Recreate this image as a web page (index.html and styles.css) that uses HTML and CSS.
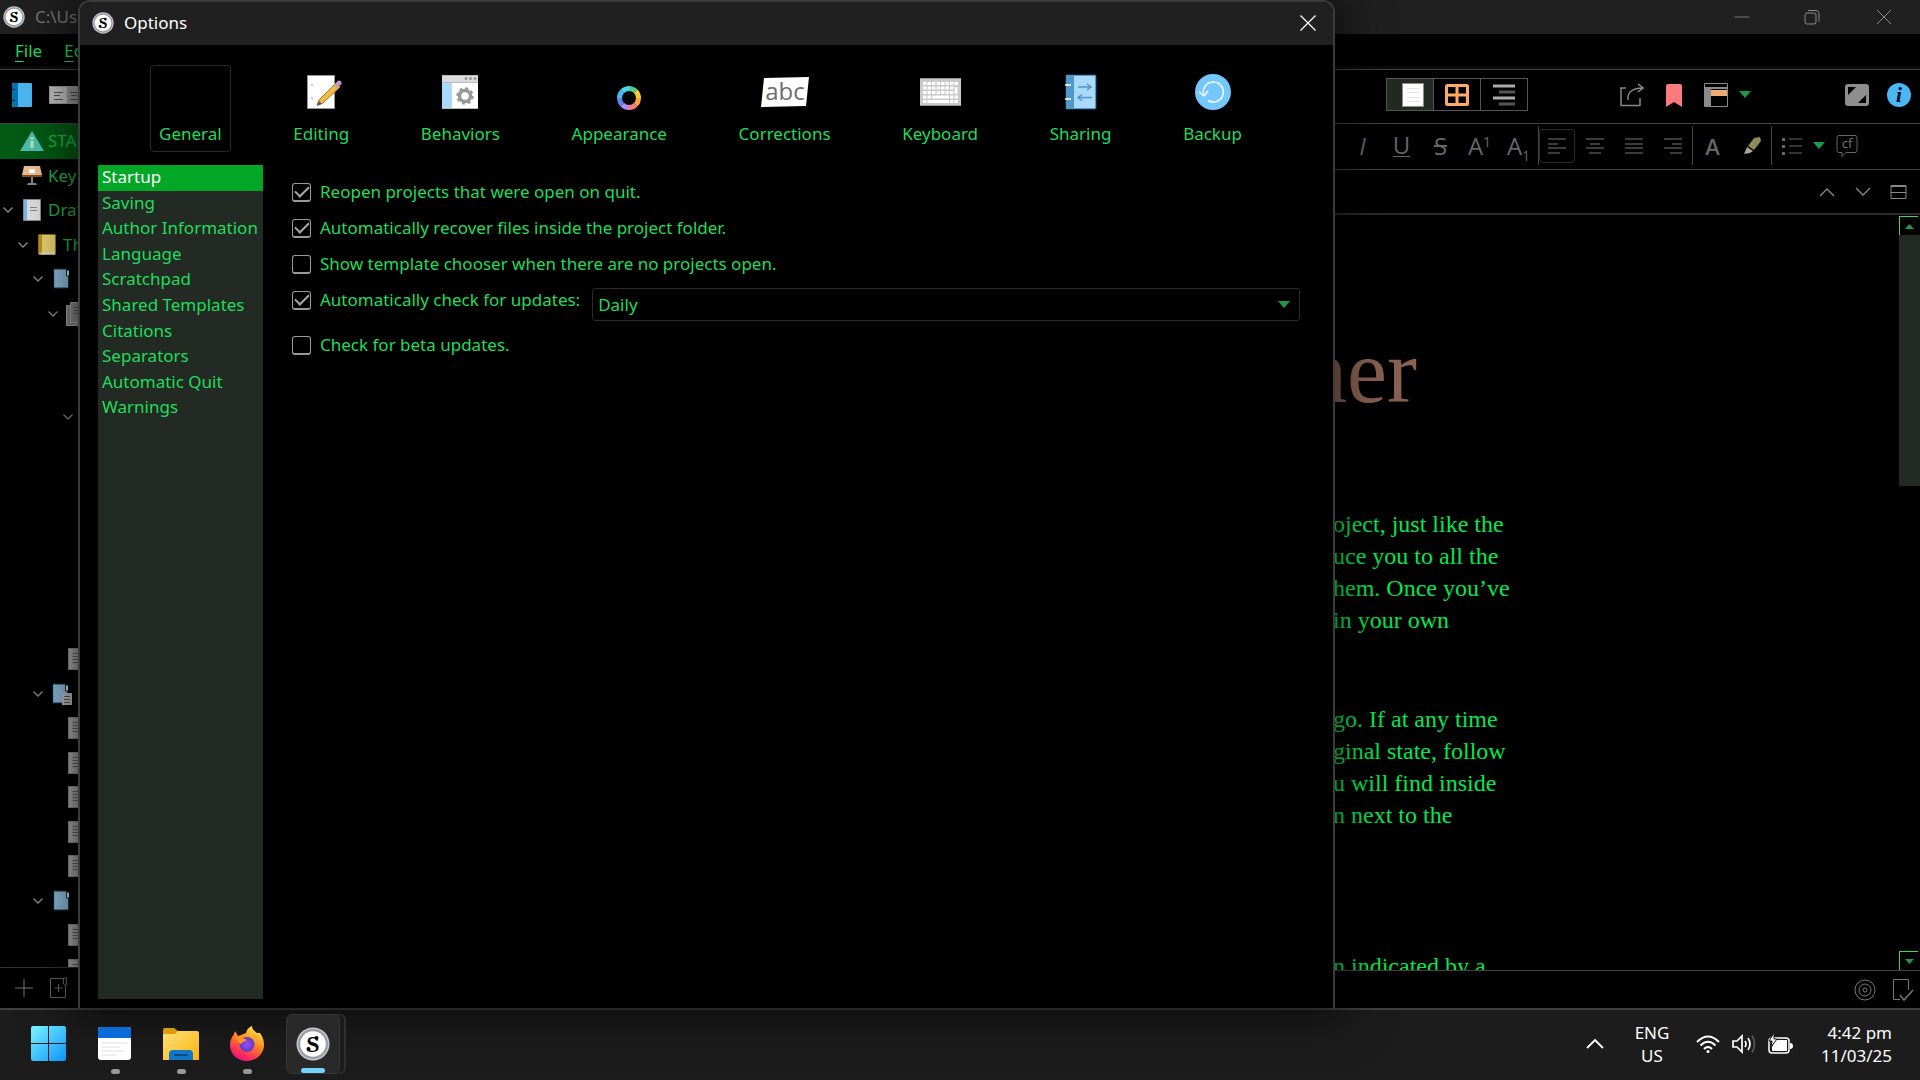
FILE: index.html
```html
<!DOCTYPE html>
<html lang="en">
<head>
<meta charset="utf-8">
<title>Options</title>
<link rel="stylesheet" href="styles.css">
</head>
<body>
<svg class="defs" aria-hidden="true">
  <defs>
    <linearGradient id="win" x1="0" y1="0" x2="1" y2="1"><stop offset="0" stop-color="#7df3ff"/><stop offset="1" stop-color="#0a94fb"/></linearGradient>
    <linearGradient id="fold" x1="0" y1="0" x2="1" y2="1"><stop offset="0" stop-color="#ffe07a"/><stop offset="1" stop-color="#f9b50c"/></linearGradient>
    <linearGradient id="fox" x1=".8" y1="0" x2=".3" y2="1"><stop offset="0" stop-color="#fff04a"/><stop offset=".45" stop-color="#ff8a1e"/><stop offset=".8" stop-color="#ff2f55"/><stop offset="1" stop-color="#e0128a"/></linearGradient>
    <radialGradient id="globe"><stop offset="0" stop-color="#9a4df5"/><stop offset="1" stop-color="#5a3cc4"/></radialGradient>
    <linearGradient id="grey"><stop offset="0" stop-color="#b4b4b4"/><stop offset="1" stop-color="#8c8c8c"/></linearGradient>
  </defs>
  <symbol id="logo" viewBox="0 0 34 34">
    <circle cx="17" cy="17" r="16.5" fill="#c4c6cc"/><circle cx="17" cy="17" r="15" fill="#9a9ca6"/><circle cx="17" cy="17" r="12.8" fill="#fff"/>
    <text x="17" y="25" text-anchor="middle" font-family="Liberation Serif, serif" font-weight="bold" font-size="24" fill="#0a0a0a">S</text>
    <circle cx="20.500" cy="11" r="2" fill="#0a0a0a"/><circle cx="12.500" cy="22" r="2" fill="#0a0a0a"/>
  </symbol>
  <symbol id="chev" viewBox="0 0 12 8"><path d="M1.500 1.500 6 6l4.500-4.500" fill="none" stroke="#8a8a8a" stroke-width="1.300"/></symbol>
  <symbol id="doc" viewBox="0 0 18 22"><path d="M0 0h18v22H0z" fill="#8a8a8a"/><path d="M1 1h17v20H1z" fill="url(#grey)"/><path d="M4.500 5.500H14M4.500 8.500H14M4.500 11.500H14M4.500 14.500H14" stroke="#666"/></symbol>
  <symbol id="folder" viewBox="0 0 18 22"><path d="M1 1h12.500v7h2v12H1z" fill="#8bb9d8" stroke="#10354d"/><path d="M15 2.500v5" stroke="#ddd" stroke-width="2"/><path d="M1.500 1.500v18" stroke="#6aa6cc"/></symbol>
  <symbol id="tri" viewBox="0 0 12 8"><path d="M0 0h12L6 7z" fill="#1c9a48"/></symbol>
</svg>

<main class="desktop">
  <section class="app" aria-label="Editor window">
    <header class="titlebar">
      <svg class="i22"><use href="#logo"/></svg>
      <span class="path">C:\Users</span>
      <div class="winctl">
        <button aria-label="Minimize"><svg width="16" height="16"><path d="M.5 8h15" stroke="#777"/></svg></button>
        <button aria-label="Restore"><svg width="16" height="16" fill="none" stroke="#8a8a8a"><rect x="1" y="4" width="11" height="11" rx="2"/><path d="M4 1.500h8q3 0 3 3v8"/></svg></button>
        <button aria-label="Close window"><svg width="16" height="16"><path d="m1 1 14 14M15 1 1 15" stroke="#8a8a8a"/></svg></button>
      </div>
    </header>
    <nav class="menubar"><a href="#file"><u>F</u>ile</a><a href="#edit"><u>E</u>dit</a></nav>
    <div class="toolbar">
      <button aria-label="Binder"><svg width="20" height="24"><rect width="20" height="24" rx="1" fill="#4ab6f2"/><path d="M1 0h5v24H1L0 22V2z" fill="#0672b0"/><path d="M0 6.500h3M0 17.500h3" stroke="#012"/></svg></button>
      <button class="cards" aria-label="Collections"><svg width="32" height="18"><path d="M0 0h32v18H0z" fill="#9a9a9a"/><path d="M1 1h17v16H1z" fill="#c0c0c0"/><path d="M5 6.500h9M5 9.500h6M5 13.500h9M21 6.500h8M22 9.500h6M21 13.500h8" stroke="#555"/></svg></button>
      <div class="viewgroup">
        <button class="on" aria-label="Document"><svg width="22" height="24"><rect x=".5" y=".5" width="21" height="23" fill="#fff" stroke="#8c8c8c"/><path d="M5 5.500h12M5 9.500h12M5 14.500h12M5 18.500h12" stroke="#e2e2e2"/></svg></button>
        <button aria-label="Corkboard"><svg width="24" height="22" fill="none" stroke="#ffab66" stroke-width="3"><rect x="1.500" y="1.500" width="21" height="19" rx="1"/><path d="M12 1v20M1 11h22"/></svg></button>
        <button aria-label="Outline"><svg width="22" height="22" stroke-width="3"><path d="M0 2h22M0 14h22" stroke="#aaa"/><path d="M6 8h16M6 20h16" stroke="#555"/></svg></button>
      </div>
      <div class="tools">
        <button class="w42" aria-label="Share"><svg width="24" height="24" fill="none" stroke="#888" stroke-width="1.500"><path d="M6 5H1v17.500h19V15"/><path d="M8 17C7 9 13 5 23 5M18 1l5 4-5 4"/></svg></button>
        <button class="w42" aria-label="Bookmark"><svg width="16" height="24"><path d="M0 3q0-2 2-2h12q2 0 2 2v21l-8-5-8 5z" fill="#ff7b7b"/></svg></button>
        <button class="w42" aria-label="Layout"><svg width="24" height="24"><path d="M.5.500h23v23H.5z" fill="#000" stroke="#8a8a8a"/><path d="M0 5h24" stroke="#8a8a8a" stroke-width="2"/><path d="M1 5h6v18H1z" fill="#8a8a8a"/><path d="M7 7h16v6H7z" fill="#f0ab74"/></svg></button>
        <button class="w16" aria-label="Layout menu"><svg class="tri"><use href="#tri"/></svg></button>
      </div>
      <div class="tools end">
        <button class="w42" aria-label="Compose"><svg width="24" height="22"><rect width="24" height="22" rx="3" fill="#8e8e8e"/><path d="M3 3h8l-8 8zM21 11v8h-8z" fill="#000"/></svg></button>
        <button class="w42" aria-label="Inspector"><svg width="24" height="24"><circle cx="12" cy="12" r="12" fill="#4ab6f2"/><text x="12" y="19" text-anchor="middle" font-family="Liberation Serif, serif" font-style="italic" font-weight="bold" font-size="21" fill="#002">i</text></svg></button>
      </div>
    </div>
    <div class="workspace">
      <aside class="binder">
        <div class="binderview"><ul class="tree">
          <li class="row sel"><i></i><b><svg width="24" height="20"><path d="M12 0 24 20H0z" fill="#4bbcb0"/><path d="M12 10v7M12 6v2.500" stroke="#b9e5b0" stroke-width="3"/></svg></b>START</li>
          <li class="row"><i></i><b><svg width="20" height="20"><path d="M2 0h16l2 9H0z" fill="#eebb92"/><path d="M0 9h20v2H0z" fill="#8b4c20"/><path d="M7 3h6v4H7z" fill="#fff"/><path d="M9 11h2v6h3l1 2H5l1-2h3z" fill="#888"/></svg></b>Key</li>
          <li class="row"><i><svg class="chev"><use href="#chev"/></svg></i><b><svg width="18" height="22"><path d="M.5.500h17v21H.5z" fill="#ddd" stroke="#888"/><path d="M1 1h3v20H1z" fill="#72b8f0"/><path d="M7 8.500h7M7 11.500h7" stroke="#888"/></svg></b>Draft</li>
          <li class="row l1"><i><svg class="chev"><use href="#chev"/></svg></i><b><svg width="18" height="22"><rect x=".5" y=".5" width="17" height="20" rx="1" fill="#e8d070" stroke="#93711c"/><path d="M1 1h3v18H1z" fill="#b6921f"/><path d="M3 19.500h14" stroke="#ddd" stroke-width="2"/></svg></b>The</li>
          <li class="row l2"><i><svg class="chev"><use href="#chev"/></svg></i><b><svg class="doc"><use href="#folder"/></svg></b></li>
          <li class="row l3"><i><svg class="chev"><use href="#chev"/></svg></i><b><svg width="22" height="24"><path d="M.5 3.500h17v20H.5z" fill="#888" stroke="#aaa"/><path d="M4.500.500h17v20h-17z" fill="#8a8a8a" stroke="#aaa"/><path d="M8 5.500h12M8 8.500h12M8 11.500h12" stroke="#555"/></svg></b></li>
          <li class="row"></li><li class="row"></li>
          <li class="row l4"><i><svg class="chev"><use href="#chev"/></svg></i></li>
          <li class="row"></li><li class="row"></li><li class="row"></li><li class="row"></li><li class="row"></li><li class="row"></li>
          <li class="row l3"><i></i><b><svg class="doc"><use href="#doc"/></svg></b></li>
          <li class="row l2"><i><svg class="chev"><use href="#chev"/></svg></i><b><svg class="doc wide" viewBox="0 0 20 22"><use href="#folder" width="18" height="22"/><path d="M10 10h10v12H10z" fill="#bbb"/><path d="M12 13.500h6M12 16.500h6M12 19.500h6" stroke="#555"/></svg></b></li>
          <li class="row l3"><i></i><b><svg class="doc"><use href="#doc"/></svg></b></li>
          <li class="row l3"><i></i><b><svg class="doc"><use href="#doc"/></svg></b></li>
          <li class="row l3"><i></i><b><svg class="doc"><use href="#doc"/></svg></b></li>
          <li class="row l3"><i></i><b><svg class="doc"><use href="#doc"/></svg></b></li>
          <li class="row l3"><i></i><b><svg class="doc"><use href="#doc"/></svg></b></li>
          <li class="row l2"><i><svg class="chev"><use href="#chev"/></svg></i><b><svg class="doc"><use href="#folder"/></svg></b></li>
          <li class="row l3"><i></i><b><svg class="doc"><use href="#doc"/></svg></b></li>
          <li class="row l3"><i></i><b><svg class="doc"><use href="#doc"/></svg></b></li>
        </ul></div>
        <div class="binderfoot">
          <button aria-label="Add"><svg width="18" height="18"><path d="M9 0v18M0 9h18" stroke="#777"/></svg></button>
          <button aria-label="Add folder"><svg width="20" height="22" fill="none" stroke="#666"><path d="M14 1.500H1.500v19h15V8M14.500 1v6l2 1.500 1-1.500V1zM9.500 7v8M5.500 11h8"/></svg></button>
        </div>
      </aside>
      <div class="editor">
        <div class="formatbar">
          <button class="fmt"><em>I</em></button><button class="fmt"><span class="ul">U</span></button><button class="fmt"><s>S</s></button>
          <button class="fmt"><span>A<sup>1</sup></span></button><button class="fmt"><span>A<sub>1</sub></span></button>
          <span class="sep"></span>
          <button class="fmt boxed" aria-label="Align left"><svg class="lines"><path d="M0 1h18M0 6h10M0 10h18M0 15h12"/></svg></button>
          <button class="fmt" aria-label="Align center"><svg class="lines"><path d="M0 1h18M4 6h10M0 10h18M3 15h12"/></svg></button>
          <button class="fmt" aria-label="Justify"><svg class="lines"><path d="M0 1h18M0 6h18M0 10h18M0 15h18"/></svg></button>
          <button class="fmt" aria-label="Align right"><svg class="lines"><path d="M0 1h18M8 6h10M0 10h18M6 15h12"/></svg></button>
          <span class="sep"></span>
          <button class="fmt"><strong>A</strong></button>
          <button class="fmt" aria-label="Highlight"><svg width="18" height="18"><path d="M11 1l6-1 1 4-7 9-6-4z" fill="#8f8a57"/><path d="m4 10 6 4-3 2-6 1z" fill="#a9a58e"/></svg></button>
          <span class="sep"></span>
          <button class="fmt" aria-label="List"><svg width="20" height="18"><path d="M7 2h13M7 9h13M7 16h13" stroke="#666"/><path d="M0 1h3v3H0zM0 8h3v3H0zM0 15h3v3H0z" fill="#666"/></svg></button>
          <button class="w16" aria-label="List menu"><svg class="tri"><use href="#tri"/></svg></button>
          <button class="fmt" aria-label="Comment"><svg width="22" height="24"><path d="M3 1.500h16q2 0 2 2v13q0 2-2 2h-9l-4 4v-4H3q-2 0-2-2v-13q0-2 2-2z" fill="none" stroke="#666"/><text x="11" y="14" text-anchor="middle" font-family="Open Sans, sans-serif" font-size="13" fill="#777">cf</text></svg></button>
        </div>
        <div class="docbar">
          <button aria-label="Previous"><svg width="16" height="10"><path d="m1 9 7-7 7 7" fill="none" stroke="#888" stroke-width="1.300"/></svg></button>
          <button aria-label="Next"><svg width="16" height="10"><path d="m1 1 7 7 7-7" fill="none" stroke="#888" stroke-width="1.300"/></svg></button>
          <button aria-label="Split"><svg width="18" height="16" fill="none" stroke="#888"><path d="M1 1.500h15v13H1zM1 8.500h15M1 2.500h15"/></svg></button>
        </div>
        <div class="page">
          <article>
            <h1>ner</h1>
            <p>oject, just like the<br>uce you to all the<br>hem. Once you’ve<br>in your own</p>
            <p>go. If at any time<br>ginal state, follow<br>u will find inside<br>n next to the</p>
            <p class="last">n indicated by a</p>
          </article>
          <div class="scroll">
            <button class="arrow" aria-label="Scroll up"><svg width="9" height="5"><path d="M0 5h9L4.500 0z" fill="#1c9a48"/></svg></button>
            <div class="track"><div class="thumb"></div></div>
            <button class="arrow" aria-label="Scroll down"><svg width="9" height="5"><path d="M0 0h9L4.500 5z" fill="#1c9a48"/></svg></button>
          </div>
        </div>
        <div class="status">
          <button aria-label="Targets"><svg width="22" height="22" fill="none" stroke="#777"><circle cx="11" cy="11" r="10"/><circle cx="11" cy="11" r="6"/><circle cx="11" cy="11" r="2"/></svg></button>
          <button aria-label="Done"><svg width="22" height="24" fill="none" stroke="#777"><path d="M8 21.500H1.500v-20h15V12" /><path d="m8 17 4 5 9-10" stroke-width="1.500"/></svg></button>
        </div>
      </div>
    </div>
  </section>

  <section class="dialog" role="dialog" aria-labelledby="dlg-title">
    <header class="dlgbar">
      <svg class="i22"><use href="#logo"/></svg>
      <h2 id="dlg-title">Options</h2>
      <button aria-label="Close"><svg width="16" height="16"><path d="m.5.500 15 15M15.500.500l-15 15" stroke="#fff" stroke-width="1.300"/></svg></button>
    </header>
    <nav class="tabs">
      <button class="tab on"><span class="ico"></span>General</button>
      <button class="tab"><span class="ico"><svg width="42" height="36"><path d="M7.500 1.500h27v33h-27z" fill="#fff" stroke="#999"/><path d="M11 11h2M11 24h2" stroke="#999"/><path d="m17 31 2-5 17-17 4 4-17 16z" fill="#f0bb47" stroke="#a97a1d"/><path d="m17 32 2-5 3 3z" fill="#555"/><path d="m34 11 3-3 3 3-3 3z" fill="#aaa"/><circle cx="39" cy="9" r="2.500" fill="#cf8ad6"/></svg></span>Editing</button>
      <button class="tab"><span class="ico"><svg width="36" height="34"><path d="M0 0h36v34H0z" fill="#fff"/><path d="M0 0h36v7H0z" fill="#dcdcdc"/><path d="M0 7h10v27H0z" fill="#a9dafb"/><path d="M0 .5h36M0 7.500h36M0 33.500h36" stroke="#bbb"/><g fill="#999"><circle cx="24" cy="3.500" r="1.500"/><circle cx="28.500" cy="3.500" r="1.500"/><circle cx="33" cy="3.500" r="1.500"/></g><circle cx="23" cy="21" r="5.500" fill="none" stroke="#999" stroke-width="3.500"/><circle cx="23" cy="21" r="7.500" fill="none" stroke="#999" stroke-width="2.500" stroke-dasharray="3 2.890"/></svg></span>Behaviors</button>
      <button class="tab"><span class="ico"><svg width="44" height="36" fill="none" stroke-width="5"><g transform="translate(32 24)"><path d="M0-9.500A9.500 9.500 0 0 1 6.700-6.700" stroke="#52cc94"/><path d="M6.700-6.700A9.500 9.500 0 0 1 9.500 0" stroke="#f7cd33"/><path d="M9.500 0A9.500 9.500 0 0 1 6.700 6.700" stroke="#ffa63b"/><path d="M6.700 6.700A9.500 9.500 0 0 1 0 9.500" stroke="#ff7d78"/><path d="M0 9.500A9.500 9.500 0 0 1-6.700 6.700" stroke="#b58cf2"/><path d="M-6.700 6.700A9.500 9.500 0 0 1-9.500 0" stroke="#5b87ea"/><path d="M-9.500 0A9.500 9.500 0 0 1-6.700-6.700" stroke="#4ab6f2"/><path d="M-6.700-6.700A9.500 9.500 0 0 1 0-9.500" stroke="#46d6e8"/></g></svg></span>Appearance</button>
      <button class="tab"><span class="ico"><svg width="48" height="30"><path d="M3 1 48 0l-3 29-45 1z" fill="#fff"/><text x="24" y="23" text-anchor="middle" font-family="Open Sans, sans-serif" font-size="24" fill="#6d6d6d">abc</text></svg></span>Corrections</button>
      <button class="tab"><span class="ico"><svg width="41" height="28"><path d="M0 0h41v28H0z" fill="#c9c9c9"/><path d="M0 .5h41M0 27.500h41" stroke="#999"/><path d="M3 5.500h35M3 10h31M3 14.500h31M3 19h35M3 23.500h35" stroke="#fff" stroke-width="3"/><path d="M36 9v7" stroke="#fff" stroke-width="3"/><path d="M7 3v22M11.500 3v18M16 3v13M20.500 3v13M25 3v13M29.500 3v22M34 3v22" stroke="#c9c9c9"/></svg></span>Keyboard</button>
      <button class="tab"><span class="ico"><svg width="32" height="36"><path d="M1 1h30v34H1z" fill="#a9dafb" stroke="#174c6e"/><path d="M1 1.500h8v33H1z" fill="#5198c9"/><path d="M0 11h6M0 25h6" stroke="#fff" stroke-width="1.500"/><path d="M13 13h13m-4-3 4 3-4 3M27 23.500H13m4-3-4 3 4 3" fill="none" stroke="#4f97c6" stroke-width="1.500"/></svg></span>Sharing</button>
      <button class="tab"><span class="ico"><svg width="36" height="36"><circle cx="18" cy="18" r="18" fill="#74c7ff"/><path d="M8.500 20A10 10 0 1 1 13 26.500" fill="none" stroke="#fff" stroke-width="1.500"/><path d="m4 18 5 4 4-5" fill="none" stroke="#fff" stroke-width="1.500"/></svg></span>Backup</button>
    </nav>
    <div class="dlgbody">
      <nav class="cats"><div class="catlist">
        <a class="on" href="#startup">Startup</a><a href="#saving">Saving</a><a href="#author">Author Information</a><a href="#language">Language</a><a href="#scratchpad">Scratchpad</a><a href="#templates">Shared Templates</a><a href="#citations">Citations</a><a href="#separators">Separators</a><a href="#quit">Automatic Quit</a><a href="#warnings">Warnings</a>
      </div></nav>
      <form class="opts">
        <label><input type="checkbox" checked>Reopen projects that were open on quit.</label>
        <label><input type="checkbox" checked>Automatically recover files inside the project folder.</label>
        <label><input type="checkbox">Show template chooser when there are no projects open.</label>
        <div class="update">
          <label><input type="checkbox" checked>Automatically check for updates:</label>
          <div class="combo"><select aria-label="Update frequency"><option>Daily</option><option>Weekly</option></select><svg class="tri"><use href="#tri"/></svg></div>
        </div>
        <label><input type="checkbox">Check for beta updates.</label>
      </form>
    </div>
  </section>
</main>

<footer class="taskbar">
  <div class="apps">
    <button aria-label="Start"><svg width="36" height="36" fill="url(#win)"><path d="M0 2q0-2 2-2h15v17H0zM18 0h15q2 0 2 2v15H18zM0 18h17v17H2q-2 0-2-2zM18 18h17v15q0 2-2 2H18z"/></svg></button>
    <button class="run" aria-label="Notes"><svg width="34" height="34"><rect width="33" height="33" rx="3" fill="#fff"/><path d="M0 11V3q0-3 3-3h27q3 0 3 3v8z" fill="#0a6cd9"/><path d="M4 16h25M4 20h18M4 24h22M4 28h14" stroke="#eee" stroke-width="2"/></svg></button>
    <button class="run" aria-label="Files"><svg width="36" height="34"><path d="M0 3q0-2 2-2h9l4 3v6H0z" fill="#dd9b07"/><path d="M0 7h12l3-3h19q2 0 2 2v27H0z" fill="url(#fold)"/><path d="M6 33v-6q0-4 4-4h16q4 0 4 4v6z" fill="#0f78c8"/><path d="M11 28h14" stroke="#064b84" stroke-width="2"/></svg></button>
    <button class="run" aria-label="Firefox"><svg width="34" height="36"><path d="M17 35C7 35 0 28 0 19c0-5 2-8 4-11l1-3 3 5 3-1 5-2c1-4 3-6 6-7 0 4 3 5 5 7l3 0c3 4 4 8 4 12 0 9-8 16-17 16z" fill="url(#fox)"/><circle cx="17" cy="18.500" r="7.500" fill="url(#globe)"/><path d="M5 11c4-1 7 1 12 3-2 2-4 1-6 4-2-1-4-4-6-7z" fill="#ff9328"/></svg></button>
    <button class="run active" aria-label="Scrivener"><svg width="34" height="34"><use href="#logo"/></svg></button>
  </div>
  <div class="tray">
    <button class="up" aria-label="Hidden icons"><svg width="18" height="12"><path d="m1 10 8-8 8 8" fill="none" stroke="#fff" stroke-width="1.800"/></svg></button>
    <button class="lang">ENG<br>US</button>
    <button class="net" aria-label="Network"><svg width="24" height="20" fill="none" stroke="#fff" stroke-width="2"><path d="M1 8q11-11 22 0M4.500 11.500q7.500-7.500 15 0M8 15q4-4 8 0"/><circle cx="12" cy="17.500" r="1.500" fill="#fff" stroke="none"/></svg>
      <svg width="24" height="20" fill="none" stroke="#fff" stroke-width="1.700"><path d="M1 7h4l5-5v16l-5-5H1zM13 7q2 3 0 6M16 4q4 6 0 12"/><path d="M20 1.500q5 8.500 0 17" stroke="#555"/></svg>
      <svg width="25" height="22"><rect x="1" y="5" width="20" height="15" rx="3" fill="none" stroke="#fff" stroke-width="1.500"/><path d="M8 7h11v11H4v-4z" fill="#fff"/><path d="M22 10q3 0 3 3t-3 3z" fill="#fff"/><path d="M6 0 1 8h3l-1 6 6-8H6z" fill="#fff" stroke="#1c1c1c"/></svg></button>
    <time>4:42 pm<br>11/03/25</time>
  </div>
</footer>
</body>
</html>
```
FILE: styles.css
```css
* { box-sizing: border-box; }
body {
  margin: 0;
  height: 100vh;
  display: flex;
  flex-direction: column;
  overflow: hidden;
  background: #000;
  color: #1fdc5c;
  font: 17px/24px "Noto Sans", "Open Sans", sans-serif;
}
button {
  display: flex;
  align-items: center;
  justify-content: center;
  padding: 0;
  border: 0;
  background: none;
  color: inherit;
  font: inherit;
}
a { color: inherit; text-decoration: none; }
svg { display: block; flex: none; }
.defs { position: absolute; width: 0; height: 0; }
.i22 { width: 22px; height: 22px; }
.tri { width: 12px; height: 8px; }
.w16 { width: 16px; }
.w42 { width: 42px; }

.desktop { flex: 1; min-height: 0; position: relative; }
.app { height: 100%; display: flex; flex-direction: column; }

.titlebar { display: flex; align-items: center; height: 34px; padding-left: 3px; background: #202020; color: #777; }
.path { padding-left: 10px; }
.winctl { display: flex; margin-left: auto; }
.winctl button { width: 70px; }
.winctl button:last-child { width: 73px; }
.menubar { display: flex; height: 36px; gap: 22px; padding: 5px 0 0 15px; border-bottom: 1px solid #444; box-shadow: inset 0 -3px #0b0b0b; }
.menubar u { text-underline-offset: 4px; }

.toolbar { display: flex; align-items: center; height: 54px; padding: 0 0 4px 12px; border-bottom: 1px solid #444; }
.cards { padding-left: 17px; }
.viewgroup { display: flex; margin-left: auto; height: 33px; border: 1px solid #555; }
.viewgroup button { width: 46px; }
.viewgroup button + button { width: 47px; border-left: 1px solid #555; }
.viewgroup .on { padding-left: 6px; background: #232a24; }
.tools { display: flex; padding-left: 83px; }

.workspace { flex: 1; min-height: 0; display: flex; }
.binder { width: 320px; display: flex; flex-direction: column; }
.binderview { flex: 1; min-height: 0; overflow: hidden; }
.tree { display: grid; grid-auto-rows: 1fr; height: 863px; margin: 0; padding: 0; list-style: none; }
.row { display: flex; align-items: center; color: #16b64a; }
.row i { display: flex; justify-content: center; width: 15px; }
.row b { display: flex; justify-content: center; width: 33px; }
.row.sel { background: #035a14; }
.l1 { padding-left: 15px; }
.l2 { padding-left: 30px; }
.l3 { padding-left: 45px; }
.l4 { padding-left: 60px; }
.chev { width: 12px; height: 8px; }
.doc { width: 18px; height: 22px; }
.doc.wide { width: 20px; }
.binderfoot { display: flex; height: 41px; gap: 16px; padding-left: 15px; border-top: 1px solid #333; }

.editor { flex: 1; min-width: 0; display: flex; flex-direction: column; }
.formatbar { display: flex; align-items: center; justify-content: flex-end; height: 46px; padding: 0 54px 2px 0; border-bottom: 1px solid #444; }
.fmt { width: 39px; height: 34px; color: #666; font: 24px/24px "Open Sans", sans-serif; }
.fmt sup, .fmt sub { font-size: 14px; line-height: 0; }
.fmt sup { vertical-align: 8px; }
.fmt .ul { border-bottom: 1px solid #666; line-height: 22px; }
.fmt strong { font-size: 22px; font-weight: 600; }
.boxed { width: 36px; border: 1px solid #2c2c2c; border-radius: 4px; }
.lines { width: 18px; height: 16px; stroke: #777; }
.sep { width: 1px; height: 39px; background: #444; }
.docbar { display: flex; justify-content: flex-end; height: 45px; padding-right: 3px; border-bottom: 2px solid #2a2a2a; }
.docbar button { width: 36px; }

.page { flex: 1; min-height: 0; display: flex; overflow: hidden; }
article { flex: 1; padding: 105px 0 0 982px; color: #02e84e; font: 24px/32px "Liberation Serif", serif; white-space: nowrap; }
h1 { margin: 0; color: #8a6052; font-size: 90px; font-weight: 400; line-height: 104px; }
article p { margin: 84px 0 0 31px; }
article p + p { margin-top: 67px; }
article p.last { margin-top: 119px; }
.scroll { display: flex; flex-direction: column; width: 21px; padding-top: 1px; }
.arrow { height: 19px; width: 19px; border-top: 1px solid #2fe060; border-left: 1px solid #2fe060; }
.track { flex: 1; }
.thumb { height: 35%; background: #232a24; }
.status { display: flex; justify-content: flex-end; height: 38px; gap: 16px; padding-right: 6px; border-top: 1px solid #444; }

.dialog {
  position: absolute;
  inset: 0 585px 0 78px;
  display: flex;
  flex-direction: column;
  border: 2px solid #3c3c3c;
  border-bottom: 0;
  border-radius: 12px 12px 0 0;
  background: #000;
  box-shadow: 0 0 48px 8px rgba(0, 0, 0, .6);
  overflow: hidden;
}
.dlgbar { display: flex; align-items: center; height: 43px; padding: 0 17px 2px 12px; background: #202020; }
.dlgbar h2 { flex: 1; margin: 0; padding-left: 10px; color: #fff; font-size: 17px; font-weight: 400; }
.tabs { display: flex; justify-content: space-between; padding: 20px 82px 0 70px; }
.tab { flex-direction: column; justify-content: flex-start; height: 87px; padding: 8px 8px 0; border: 1px solid transparent; border-radius: 4px; }
.tab.on { border-color: #2a2a2a; }
.ico { display: flex; align-items: center; justify-content: center; height: 36px; margin-bottom: 12px; }
.dlgbody { flex: 1; display: flex; padding: 13px 33px 9px 18px; }
.cats { width: 165px; background: #232a24; }
.catlist { display: grid; grid-auto-rows: 1fr; height: 256px; }
.cats a { padding-left: 4px; white-space: nowrap; }
.cats .on { background: #02a726; color: #fff; }
.opts { flex: 1; padding: 9px 0 0 29px; }
.opts label { display: flex; align-items: center; height: 36px; gap: 9px; white-space: nowrap; }
input[type="checkbox"] {
  display: grid;
  place-items: center;
  width: 19px;
  height: 19px;
  margin: 0;
  appearance: none;
  border: 1px solid #999;
  border-bottom-width: 2px;
  border-radius: 3px;
}
input:checked::after {
  content: "";
  width: 12px;
  height: 6px;
  margin-bottom: 4px;
  border: solid #aaa;
  border-width: 0 0 2px 2px;
  transform: rotate(-45deg);
}
.update { display: flex; height: 45px; gap: 12px; }
.combo { flex: 1; display: grid; align-items: center; height: 33px; margin-top: 6px; }
.combo > * { grid-area: 1 / 1; }
.combo .tri { justify-self: end; margin-right: 10px; pointer-events: none; }
select {
  width: 100%;
  height: 33px;
  padding: 0 5px;
  appearance: none;
  border: 1px solid #2a2a2a;
  border-radius: 3px;
  background: #000;
  color: inherit;
  font: inherit;
}

.taskbar { display: flex; justify-content: space-between; height: 72px; border-top: 2px solid #404040; background: #1c1c1c; color: #fff; }
.apps { display: flex; align-items: center; padding: 0 0 2px 16px; }
.apps button { position: relative; width: 66px; height: 60px; }
.apps .run::after { content: ""; position: absolute; bottom: 0; left: 29px; width: 9px; height: 5px; border-radius: 3px; background: #999; }
.apps .active { width: 54px; margin-left: 6px; border: 1px solid #363636; border-radius: 6px; background: #292929; box-shadow: 5px 0 0 -1px #1c1c1c, 6px 0 #303030; }
.apps .active::after { left: 14px; width: 24px; background: #76d2f8; }
.tray { display: flex; align-items: center; padding: 0 28px 2px 0; line-height: 23px; white-space: nowrap; }
.up { width: 40px; }
.lang { width: 74px; }
.net { width: 110px; gap: 12px; }
time { width: 93px; text-align: right; }
```
